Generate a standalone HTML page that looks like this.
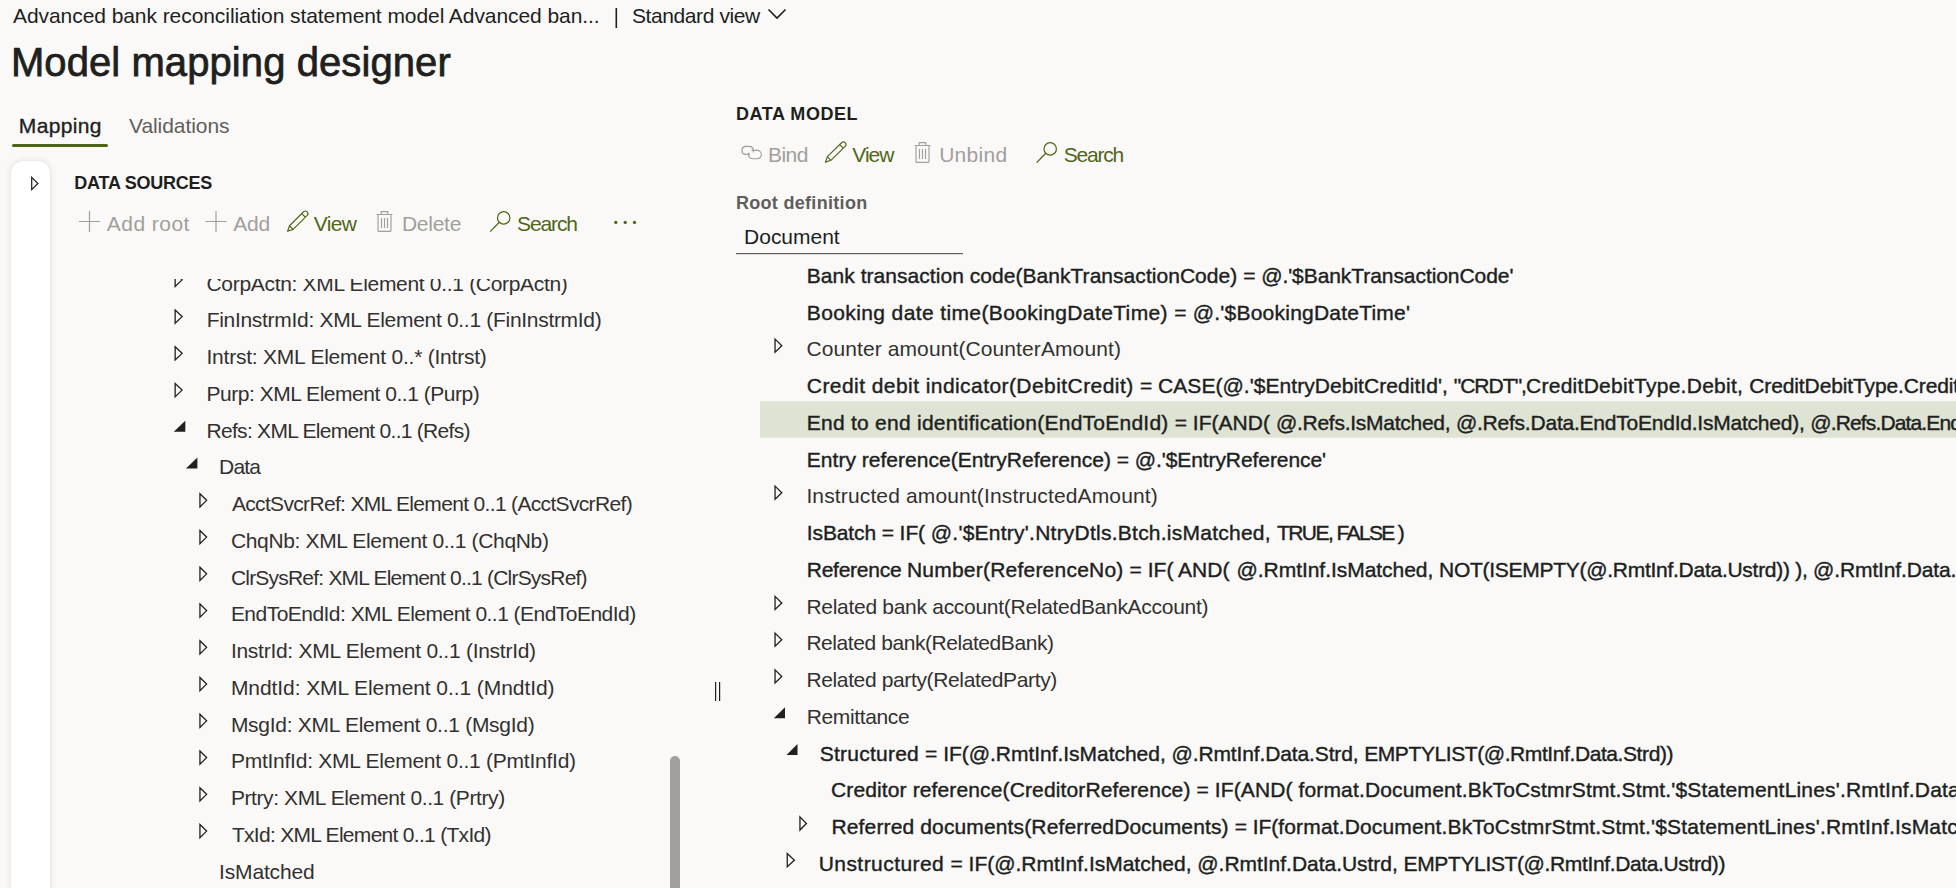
<!DOCTYPE html>
<html><head><meta charset="utf-8"><style>
html,body{margin:0;padding:0;}
body{width:1956px;height:888px;overflow:hidden;background:#faf9f8;position:relative;font-family:"Liberation Sans",sans-serif;}
.t{position:absolute;white-space:nowrap;}
#ltree{position:absolute;left:0;top:279px;width:700px;height:609px;overflow:hidden;}
#ltree .inner{position:absolute;left:0;top:-279px;width:700px;height:888px;}
</style></head><body>
<div style="position:absolute;left:11px;top:161px;width:39px;height:740px;background:#fff;border-radius:12px 12px 0 0;box-shadow:0 0 7px rgba(0,0,0,0.11), 0 0 2px rgba(0,0,0,0.06);"></div>
<svg width="1956" height="888" style="position:absolute;left:0;top:0">
<!-- separator bar and chevron -->
<rect x="615.5" y="8" width="1.6" height="20" fill="#201f1e"/>
<polyline points="768.5,9.5 777,18 785.5,9.5" fill="none" stroke="#201f1e" stroke-width="1.6"/>
<!-- tab underline -->
<rect x="12" y="144" width="96" height="3" rx="1.5" fill="#4f6617"/>
<!-- sidebar triangle -->
<polygon points="31.7,177.4 37.9,183.5 31.7,189.6" fill="none" stroke="#201f1e" stroke-width="1.25"/>
<!-- left toolbar icons -->
<path d="M89.5,211 V232 M79,221.5 H100" stroke="#a19f9d" stroke-width="1.2" fill="none"/>
<path d="M216.0,211 V232 M205.5,221.5 H226.5" stroke="#a19f9d" stroke-width="1.2" fill="none"/>
<path d="M287.60,231.20 L293.09,229.35 L307.18,215.41 A2.55,2.55 0 0 0 303.59,211.78 L289.50,225.73 Z M293.09,229.35 L289.50,225.73 M305.33,217.24 L301.75,213.61" fill="none" stroke="#4f6617" stroke-width="1.15" stroke-linejoin="round"/>
<path d="M825.40,162.10 L830.90,160.30 L845.15,146.41 A2.55,2.55 0 0 0 841.59,142.75 L827.34,156.64 Z M830.90,160.30 L827.34,156.64 M843.29,148.22 L839.73,144.57" fill="none" stroke="#4f6617" stroke-width="1.15" stroke-linejoin="round"/>
<path d="M376.5,214.5 H392.5 M381.2,214.5 V211.6 H387.8 V214.5 M378,214.5 V230.4 Q378,231.4 379,231.4 H390 Q391,231.4 391,230.4 V214.5 M381.5,218 V228 M384.5,218 V228 M387.5,218 V228" stroke="#a19f9d" stroke-width="1.15" fill="none"/>
<path d="M914.5,145.5 H930.5 M919.2,145.5 V142.6 H925.8 V145.5 M916,145.5 V161.4 Q916,162.4 917,162.4 H928 Q929,162.4 929,161.4 V145.5 M919.5,149 V159 M922.5,149 V159 M925.5,149 V159" stroke="#a19f9d" stroke-width="1.15" fill="none"/>
<circle cx="503.7" cy="217.9" r="6.2" stroke="#4f6617" stroke-width="1.2" fill="none"/><path d="M499.3,222.3 L490.1,231.6" stroke="#4f6617" stroke-width="1.3" fill="none"/>
<circle cx="1050.2" cy="148.9" r="6.2" stroke="#4f6617" stroke-width="1.2" fill="none"/><path d="M1045.8,153.3 L1036.6,162.6" stroke="#4f6617" stroke-width="1.3" fill="none"/>
<path d="M749.8,154.4 H745.0 A4.15,4.15 0 0 1 745.0,146.4 H749.4 A4.15,4.15 0 0 1 753.0999999999999,152.4 M751.4,150.4 H757.1999999999999 A4.15,4.15 0 0 1 757.1999999999999,158.70000000000002 H752.8 A4.15,4.15 0 0 1 749.0,152.60000000000002" stroke="#a19f9d" stroke-width="1.15" fill="none"/>
<g fill="#4f6617"><circle cx="615.8" cy="222.4" r="1.65"/><circle cx="625.2" cy="222.4" r="1.65"/><circle cx="634.5" cy="222.4" r="1.65"/></g>
<!-- root def underline -->
<rect x="736" y="253" width="227" height="1.2" fill="#605e5c"/>
<!-- highlight row -->
<rect x="760" y="401.2" width="1196" height="36.5" fill="#dfe3d3"/>
<!-- splitter -->
<rect x="715" y="682" width="1.2" height="19" fill="#201f1e"/><rect x="719" y="682" width="1.2" height="19" fill="#201f1e"/>
<!-- scrollbar -->
<rect x="670" y="756" width="10" height="140" rx="5" fill="#a19f9d"/>
</svg>
<div class="t" style="left:13.00px;top:5.22px;font-size:21px;line-height:21px;font-weight:400;color:#201f1e;letter-spacing:-0.068px;">Advanced bank reconciliation statement model Advanced ban...</div>
<div class="t" style="left:632.00px;top:5.22px;font-size:21px;line-height:21px;font-weight:400;color:#201f1e;letter-spacing:-0.409px;">Standard view</div>
<div class="t" style="left:10.90px;top:42.14px;font-size:40px;line-height:40px;font-weight:400;color:#201f1e;letter-spacing:0.084px;-webkit-text-stroke:0.75px #201f1e;">Model mapping designer</div>
<div class="t" style="left:18.80px;top:115.22px;font-size:21px;line-height:21px;font-weight:400;color:#201f1e;letter-spacing:0.354px;-webkit-text-stroke:0.35px #201f1e;">Mapping</div>
<div class="t" style="left:129.00px;top:115.22px;font-size:21px;line-height:21px;font-weight:400;color:#605e5c;letter-spacing:-0.068px;">Validations</div>
<div class="t" style="left:74.30px;top:173.56px;font-size:18px;line-height:18px;font-weight:700;color:#201f1e;letter-spacing:-0.239px;">DATA SOURCES</div>
<div class="t" style="left:106.80px;top:213.22px;font-size:21px;line-height:21px;font-weight:400;color:#a19f9d;letter-spacing:0.464px;">Add root</div>
<div class="t" style="left:233.30px;top:213.22px;font-size:21px;line-height:21px;font-weight:400;color:#a19f9d;letter-spacing:-0.293px;">Add</div>
<div class="t" style="left:313.80px;top:213.22px;font-size:21px;line-height:21px;font-weight:400;color:#4f6617;letter-spacing:-0.691px;">View</div>
<div class="t" style="left:401.90px;top:213.22px;font-size:21px;line-height:21px;font-weight:400;color:#a19f9d;letter-spacing:-0.245px;">Delete</div>
<div class="t" style="left:517.00px;top:213.22px;font-size:21px;line-height:21px;font-weight:400;color:#4f6617;letter-spacing:-1.112px;">Search</div>
<div class="t" style="left:735.90px;top:104.66px;font-size:18px;line-height:18px;font-weight:700;color:#201f1e;letter-spacing:0.564px;">DATA MODEL</div>
<div class="t" style="left:768.00px;top:144.22px;font-size:21px;line-height:21px;font-weight:400;color:#a19f9d;letter-spacing:-0.551px;">Bind</div>
<div class="t" style="left:852.30px;top:144.22px;font-size:21px;line-height:21px;font-weight:400;color:#4f6617;letter-spacing:-0.991px;">View</div>
<div class="t" style="left:939.20px;top:144.22px;font-size:21px;line-height:21px;font-weight:400;color:#a19f9d;letter-spacing:0.266px;">Unbind</div>
<div class="t" style="left:1063.70px;top:144.22px;font-size:21px;line-height:21px;font-weight:400;color:#4f6617;letter-spacing:-1.192px;">Search</div>
<div class="t" style="left:735.90px;top:193.66px;font-size:18px;line-height:18px;font-weight:700;color:#605e5c;letter-spacing:0.309px;">Root definition</div>
<div class="t" style="left:744.10px;top:226.12px;font-size:21px;line-height:21px;font-weight:400;color:#201f1e;letter-spacing:-0.025px;">Document</div>
<div id="ltree"><div class="inner">
<div class="t" style="left:206.50px;top:272.57px;font-size:21px;line-height:21px;font-weight:400;color:#323130;letter-spacing:-0.316px;">CorpActn: XML Element 0..1 (CorpActn)</div>
<div class="t" style="left:206.70px;top:309.32px;font-size:21px;line-height:21px;font-weight:400;color:#323130;letter-spacing:-0.301px;">FinInstrmId: XML Element 0..1 (FinInstrmId)</div>
<div class="t" style="left:206.50px;top:346.07px;font-size:21px;line-height:21px;font-weight:400;color:#323130;letter-spacing:-0.224px;">Intrst: XML Element 0..* (Intrst)</div>
<div class="t" style="left:206.50px;top:382.82px;font-size:21px;line-height:21px;font-weight:400;color:#323130;letter-spacing:-0.465px;">Purp: XML Element 0..1 (Purp)</div>
<div class="t" style="left:206.60px;top:419.57px;font-size:21px;line-height:21px;font-weight:400;color:#323130;letter-spacing:-0.720px;">Refs: XML Element 0..1 (Refs)</div>
<div class="t" style="left:219.10px;top:456.32px;font-size:21px;line-height:21px;font-weight:400;color:#323130;letter-spacing:-0.860px;">Data</div>
<div class="t" style="left:231.90px;top:493.07px;font-size:21px;line-height:21px;font-weight:400;color:#323130;letter-spacing:-0.665px;">AcctSvcrRef: XML Element 0..1 (AcctSvcrRef)</div>
<div class="t" style="left:230.90px;top:529.82px;font-size:21px;line-height:21px;font-weight:400;color:#323130;letter-spacing:-0.345px;">ChqNb: XML Element 0..1 (ChqNb)</div>
<div class="t" style="left:230.90px;top:566.57px;font-size:21px;line-height:21px;font-weight:400;color:#323130;letter-spacing:-0.788px;">ClrSysRef: XML Element 0..1 (ClrSysRef)</div>
<div class="t" style="left:230.90px;top:603.32px;font-size:21px;line-height:21px;font-weight:400;color:#323130;letter-spacing:-0.529px;">EndToEndId: XML Element 0..1 (EndToEndId)</div>
<div class="t" style="left:230.90px;top:640.07px;font-size:21px;line-height:21px;font-weight:400;color:#323130;letter-spacing:-0.268px;">InstrId: XML Element 0..1 (InstrId)</div>
<div class="t" style="left:230.90px;top:676.82px;font-size:21px;line-height:21px;font-weight:400;color:#323130;letter-spacing:-0.075px;">MndtId: XML Element 0..1 (MndtId)</div>
<div class="t" style="left:230.90px;top:713.57px;font-size:21px;line-height:21px;font-weight:400;color:#323130;letter-spacing:-0.273px;">MsgId: XML Element 0..1 (MsgId)</div>
<div class="t" style="left:230.90px;top:750.32px;font-size:21px;line-height:21px;font-weight:400;color:#323130;letter-spacing:-0.245px;">PmtInfId: XML Element 0..1 (PmtInfId)</div>
<div class="t" style="left:230.90px;top:787.07px;font-size:21px;line-height:21px;font-weight:400;color:#323130;letter-spacing:-0.399px;">Prtry: XML Element 0..1 (Prtry)</div>
<div class="t" style="left:231.90px;top:823.82px;font-size:21px;line-height:21px;font-weight:400;color:#323130;letter-spacing:-0.703px;">TxId: XML Element 0..1 (TxId)</div>
<div class="t" style="left:219.00px;top:860.57px;font-size:21px;line-height:21px;font-weight:400;color:#323130;letter-spacing:-0.150px;">IsMatched</div>
<svg width="700" height="888" style="position:absolute;left:0;top:0"><polygon points="175.15,273.25 182.1,279.85 175.15,286.45000000000005" fill="none" stroke="#201f1e" stroke-width="1.3" stroke-linejoin="miter"/>
<polygon points="175.15,310.0 182.1,316.6 175.15,323.20000000000005" fill="none" stroke="#201f1e" stroke-width="1.3" stroke-linejoin="miter"/>
<polygon points="175.15,346.75 182.1,353.35 175.15,359.95000000000005" fill="none" stroke="#201f1e" stroke-width="1.3" stroke-linejoin="miter"/>
<polygon points="175.15,383.5 182.1,390.1 175.15,396.70000000000005" fill="none" stroke="#201f1e" stroke-width="1.3" stroke-linejoin="miter"/>
<polygon points="185.3,420.85 185.3,431.85 173.8,431.85" fill="#201f1e"/>
<polygon points="197.4,457.6 197.4,468.6 186,468.6" fill="#201f1e"/>
<polygon points="199.95,493.75 206.6,500.35 199.95,506.95000000000005" fill="none" stroke="#201f1e" stroke-width="1.3" stroke-linejoin="miter"/>
<polygon points="199.95,530.5 206.6,537.1 199.95,543.7" fill="none" stroke="#201f1e" stroke-width="1.3" stroke-linejoin="miter"/>
<polygon points="199.95,567.25 206.6,573.85 199.95,580.45" fill="none" stroke="#201f1e" stroke-width="1.3" stroke-linejoin="miter"/>
<polygon points="199.95,604.0 206.6,610.6 199.95,617.2" fill="none" stroke="#201f1e" stroke-width="1.3" stroke-linejoin="miter"/>
<polygon points="199.95,640.75 206.6,647.35 199.95,653.95" fill="none" stroke="#201f1e" stroke-width="1.3" stroke-linejoin="miter"/>
<polygon points="199.95,677.5 206.6,684.1 199.95,690.7" fill="none" stroke="#201f1e" stroke-width="1.3" stroke-linejoin="miter"/>
<polygon points="199.95,714.25 206.6,720.85 199.95,727.45" fill="none" stroke="#201f1e" stroke-width="1.3" stroke-linejoin="miter"/>
<polygon points="199.95,751.0 206.6,757.6 199.95,764.2" fill="none" stroke="#201f1e" stroke-width="1.3" stroke-linejoin="miter"/>
<polygon points="199.95,787.75 206.6,794.35 199.95,800.95" fill="none" stroke="#201f1e" stroke-width="1.3" stroke-linejoin="miter"/>
<polygon points="199.95,824.5 206.6,831.1 199.95,837.7" fill="none" stroke="#201f1e" stroke-width="1.3" stroke-linejoin="miter"/></svg></div></div>
<div class="t" style="left:806.80px;top:264.92px;font-size:21px;line-height:21px;font-weight:400;color:#201f1e;letter-spacing:0.041px;-webkit-text-stroke:0.4px #201f1e;">Bank transaction code(BankTransactionCode) </div>
<div class="t" style="left:1243.20px;top:264.92px;font-size:21px;line-height:21px;font-weight:400;color:#201f1e;letter-spacing:-0.070px;-webkit-text-stroke:0.4px #201f1e;">= @.&#x27;$BankTransactionCode&#x27;</div>
<div class="t" style="left:806.80px;top:301.67px;font-size:21px;line-height:21px;font-weight:400;color:#201f1e;letter-spacing:0.381px;-webkit-text-stroke:0.4px #201f1e;">Booking date time(BookingDateTime) </div>
<div class="t" style="left:1174.20px;top:301.67px;font-size:21px;line-height:21px;font-weight:400;color:#201f1e;letter-spacing:0.225px;-webkit-text-stroke:0.4px #201f1e;">= @.&#x27;$BookingDateTime&#x27;</div>
<div class="t" style="left:806.40px;top:338.42px;font-size:21px;line-height:21px;font-weight:400;color:#323130;letter-spacing:0.101px;">Counter amount(CounterAmount)</div>
<div class="t" style="left:806.80px;top:375.17px;font-size:21px;line-height:21px;font-weight:400;color:#201f1e;letter-spacing:0.434px;-webkit-text-stroke:0.4px #201f1e;">Credit debit indicator(DebitCredit) </div>
<div class="t" style="left:1139.90px;top:375.17px;font-size:21px;line-height:21px;font-weight:400;color:#201f1e;letter-spacing:0.045px;-webkit-text-stroke:0.4px #201f1e;">= CASE(@.&#x27;$EntryDebitCreditId&#x27;, </div>
<div class="t" style="left:1453.70px;top:375.17px;font-size:21px;line-height:21px;font-weight:400;color:#201f1e;letter-spacing:-0.967px;-webkit-text-stroke:0.4px #201f1e;">&quot;CRDT&quot;,</div>
<div class="t" style="left:1526.00px;top:375.17px;font-size:21px;line-height:21px;font-weight:400;color:#201f1e;letter-spacing:0.270px;-webkit-text-stroke:0.4px #201f1e;">CreditDebitType.Debit, </div>
<div class="t" style="left:1749.30px;top:375.17px;font-size:21px;line-height:21px;font-weight:400;color:#201f1e;letter-spacing:-0.121px;-webkit-text-stroke:0.4px #201f1e;">CreditDebitType.Credit)</div>
<div class="t" style="left:806.80px;top:411.92px;font-size:21px;line-height:21px;font-weight:400;color:#201f1e;letter-spacing:0.250px;-webkit-text-stroke:0.4px #201f1e;">End to end identification(EndToEndId) </div>
<div class="t" style="left:1174.70px;top:411.92px;font-size:21px;line-height:21px;font-weight:400;color:#201f1e;letter-spacing:0.028px;-webkit-text-stroke:0.4px #201f1e;">= IF(AND( </div>
<div class="t" style="left:1275.90px;top:411.92px;font-size:21px;line-height:21px;font-weight:400;color:#201f1e;letter-spacing:-0.262px;-webkit-text-stroke:0.4px #201f1e;">@.Refs.IsMatched, </div>
<div class="t" style="left:1455.90px;top:411.92px;font-size:21px;line-height:21px;font-weight:400;color:#201f1e;letter-spacing:-0.225px;-webkit-text-stroke:0.4px #201f1e;">@.Refs.Data.EndToEndId.IsMatched), </div>
<div class="t" style="left:1810.20px;top:411.92px;font-size:21px;line-height:21px;font-weight:400;color:#201f1e;letter-spacing:-0.851px;-webkit-text-stroke:0.4px #201f1e;">@.Refs.Data.EndToEndId.Data, &quot;&quot;)</div>
<div class="t" style="left:806.80px;top:448.67px;font-size:21px;line-height:21px;font-weight:400;color:#201f1e;letter-spacing:0.022px;-webkit-text-stroke:0.4px #201f1e;">Entry reference(EntryReference) </div>
<div class="t" style="left:1116.80px;top:448.67px;font-size:21px;line-height:21px;font-weight:400;color:#201f1e;letter-spacing:-0.082px;-webkit-text-stroke:0.4px #201f1e;">= @.&#x27;$EntryReference&#x27;</div>
<div class="t" style="left:806.40px;top:485.42px;font-size:21px;line-height:21px;font-weight:400;color:#323130;letter-spacing:0.139px;">Instructed amount(InstructedAmount)</div>
<div class="t" style="left:806.80px;top:522.17px;font-size:21px;line-height:21px;font-weight:400;color:#201f1e;letter-spacing:-0.121px;-webkit-text-stroke:0.4px #201f1e;">IsBatch </div>
<div class="t" style="left:881.70px;top:522.17px;font-size:21px;line-height:21px;font-weight:400;color:#201f1e;letter-spacing:-0.081px;-webkit-text-stroke:0.4px #201f1e;">= IF( </div>
<div class="t" style="left:930.80px;top:522.17px;font-size:21px;line-height:21px;font-weight:400;color:#201f1e;letter-spacing:0.241px;-webkit-text-stroke:0.4px #201f1e;">@.&#x27;$Entry&#x27;.NtryDtls.Btch.isMatched, </div>
<div class="t" style="left:1276.90px;top:522.17px;font-size:21px;line-height:21px;font-weight:400;color:#201f1e;letter-spacing:-1.522px;-webkit-text-stroke:0.4px #201f1e;">TRUE, </div>
<div class="t" style="left:1336.60px;top:522.17px;font-size:21px;line-height:21px;font-weight:400;color:#201f1e;letter-spacing:-1.684px;-webkit-text-stroke:0.4px #201f1e;">FALSE )</div>
<div class="t" style="left:806.80px;top:558.92px;font-size:21px;line-height:21px;font-weight:400;color:#201f1e;letter-spacing:-0.262px;-webkit-text-stroke:0.4px #201f1e;">Reference </div>
<div class="t" style="left:906.90px;top:558.92px;font-size:21px;line-height:21px;font-weight:400;color:#201f1e;letter-spacing:0.223px;-webkit-text-stroke:0.4px #201f1e;">Number(ReferenceNo) </div>
<div class="t" style="left:1129.60px;top:558.92px;font-size:21px;line-height:21px;font-weight:400;color:#201f1e;letter-spacing:0.013px;-webkit-text-stroke:0.4px #201f1e;">= IF( AND( </div>
<div class="t" style="left:1236.50px;top:558.92px;font-size:21px;line-height:21px;font-weight:400;color:#201f1e;letter-spacing:-0.044px;-webkit-text-stroke:0.4px #201f1e;">@.RmtInf.IsMatched, </div>
<div class="t" style="left:1439.00px;top:558.92px;font-size:21px;line-height:21px;font-weight:400;color:#201f1e;letter-spacing:-0.272px;-webkit-text-stroke:0.4px #201f1e;">NOT(ISEMPTY(@.RmtInf.Data.Ustrd)) ), </div>
<div class="t" style="left:1813.10px;top:558.92px;font-size:21px;line-height:21px;font-weight:400;color:#201f1e;letter-spacing:-0.130px;-webkit-text-stroke:0.4px #201f1e;">@.RmtInf.Data.Ustrd, &quot;&quot;)</div>
<div class="t" style="left:806.40px;top:595.67px;font-size:21px;line-height:21px;font-weight:400;color:#323130;letter-spacing:-0.286px;">Related bank account(RelatedBankAccount)</div>
<div class="t" style="left:806.40px;top:632.42px;font-size:21px;line-height:21px;font-weight:400;color:#323130;letter-spacing:-0.433px;">Related bank(RelatedBank)</div>
<div class="t" style="left:806.40px;top:669.17px;font-size:21px;line-height:21px;font-weight:400;color:#323130;letter-spacing:-0.361px;">Related party(RelatedParty)</div>
<div class="t" style="left:806.70px;top:705.92px;font-size:21px;line-height:21px;font-weight:400;color:#323130;letter-spacing:-0.359px;">Remittance</div>
<div class="t" style="left:819.70px;top:742.67px;font-size:21px;line-height:21px;font-weight:400;color:#201f1e;letter-spacing:0.244px;-webkit-text-stroke:0.4px #201f1e;">Structured </div>
<div class="t" style="left:925.10px;top:742.67px;font-size:21px;line-height:21px;font-weight:400;color:#201f1e;letter-spacing:-0.029px;-webkit-text-stroke:0.4px #201f1e;">= IF(@.RmtInf.IsMatched, </div>
<div class="t" style="left:1171.50px;top:742.67px;font-size:21px;line-height:21px;font-weight:400;color:#201f1e;letter-spacing:-0.125px;-webkit-text-stroke:0.4px #201f1e;">@.RmtInf.Data.Strd, </div>
<div class="t" style="left:1364.20px;top:742.67px;font-size:21px;line-height:21px;font-weight:400;color:#201f1e;letter-spacing:-0.411px;-webkit-text-stroke:0.4px #201f1e;">EMPTYLIST(@.RmtInf.Data.Strd))</div>
<div class="t" style="left:831.00px;top:779.42px;font-size:21px;line-height:21px;font-weight:400;color:#201f1e;letter-spacing:0.128px;-webkit-text-stroke:0.4px #201f1e;">Creditor reference(CreditorReference) </div>
<div class="t" style="left:1196.50px;top:779.42px;font-size:21px;line-height:21px;font-weight:400;color:#201f1e;letter-spacing:0.108px;-webkit-text-stroke:0.4px #201f1e;">= IF(AND( </div>
<div class="t" style="left:1298.50px;top:779.42px;font-size:21px;line-height:21px;font-weight:400;color:#201f1e;letter-spacing:0.149px;-webkit-text-stroke:0.4px #201f1e;">format.Document.BkToCstmrStmt.Stmt.</div>
<div class="t" style="left:1671.30px;top:779.42px;font-size:21px;line-height:21px;font-weight:400;color:#201f1e;letter-spacing:0.175px;-webkit-text-stroke:0.4px #201f1e;">&#x27;$StatementLines&#x27;.RmtInf.Data.Strd.CdtrRefInf), &quot;&quot;)</div>
<div class="t" style="left:831.50px;top:816.17px;font-size:21px;line-height:21px;font-weight:400;color:#201f1e;letter-spacing:0.137px;-webkit-text-stroke:0.4px #201f1e;">Referred documents(ReferredDocuments) </div>
<div class="t" style="left:1234.70px;top:816.17px;font-size:21px;line-height:21px;font-weight:400;color:#201f1e;letter-spacing:-0.031px;-webkit-text-stroke:0.4px #201f1e;">= IF(</div>
<div class="t" style="left:1278.30px;top:816.17px;font-size:21px;line-height:21px;font-weight:400;color:#201f1e;letter-spacing:0.147px;-webkit-text-stroke:0.4px #201f1e;">format.Document.BkToCstmrStmt.Stmt.</div>
<div class="t" style="left:1651.00px;top:816.17px;font-size:21px;line-height:21px;font-weight:400;color:#201f1e;letter-spacing:0.192px;-webkit-text-stroke:0.4px #201f1e;">&#x27;$StatementLines&#x27;.RmtInf.IsMatched, &quot;&quot;)</div>
<div class="t" style="left:818.70px;top:852.92px;font-size:21px;line-height:21px;font-weight:400;color:#201f1e;letter-spacing:0.442px;-webkit-text-stroke:0.4px #201f1e;">Unstructured </div>
<div class="t" style="left:950.50px;top:852.92px;font-size:21px;line-height:21px;font-weight:400;color:#201f1e;letter-spacing:-0.013px;-webkit-text-stroke:0.4px #201f1e;">= IF(@.RmtInf.IsMatched, </div>
<div class="t" style="left:1197.30px;top:852.92px;font-size:21px;line-height:21px;font-weight:400;color:#201f1e;letter-spacing:-0.027px;-webkit-text-stroke:0.4px #201f1e;">@.RmtInf.Data.Ustrd, </div>
<div class="t" style="left:1403.60px;top:852.92px;font-size:21px;line-height:21px;font-weight:400;color:#201f1e;letter-spacing:-0.366px;-webkit-text-stroke:0.4px #201f1e;">EMPTYLIST(@.RmtInf.Data.Ustrd))</div>
<svg width="1956" height="888" style="position:absolute;left:0;top:0"><polygon points="775.05,339.09999999999997 781.8,345.7 775.05,352.3" fill="none" stroke="#201f1e" stroke-width="1.3" stroke-linejoin="miter"/>
<polygon points="775.05,486.09999999999997 781.8,492.7 775.05,499.3" fill="none" stroke="#201f1e" stroke-width="1.3" stroke-linejoin="miter"/>
<polygon points="775.05,596.35 781.8,602.95 775.05,609.5500000000001" fill="none" stroke="#201f1e" stroke-width="1.3" stroke-linejoin="miter"/>
<polygon points="775.05,633.1 781.8,639.7 775.05,646.3000000000001" fill="none" stroke="#201f1e" stroke-width="1.3" stroke-linejoin="miter"/>
<polygon points="775.05,669.85 781.8,676.45 775.05,683.0500000000001" fill="none" stroke="#201f1e" stroke-width="1.3" stroke-linejoin="miter"/>
<polygon points="785,707.2 785,718.2 773.8,718.2" fill="#201f1e"/>
<polygon points="797.5,743.95 797.5,754.95 786.5,754.95" fill="#201f1e"/>
<polygon points="799.95,816.85 806.4,823.45 799.95,830.0500000000001" fill="none" stroke="#201f1e" stroke-width="1.3" stroke-linejoin="miter"/>
<polygon points="787.25,853.6 794.4,860.2 787.25,866.8000000000001" fill="none" stroke="#201f1e" stroke-width="1.3" stroke-linejoin="miter"/></svg>
</body></html>
